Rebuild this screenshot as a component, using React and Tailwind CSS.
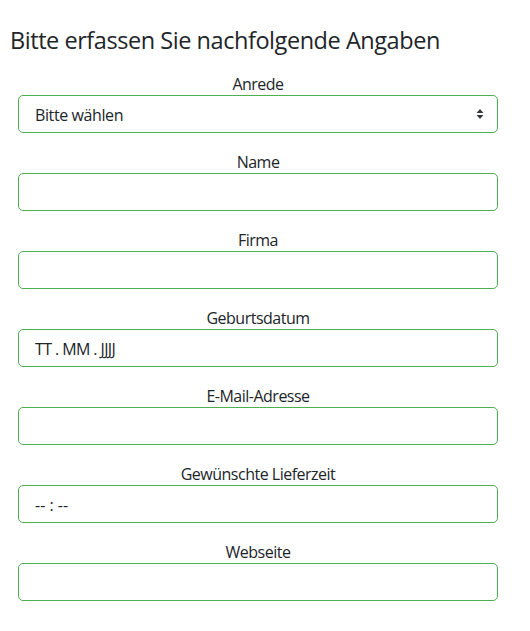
import React from "react";

function Field({ label, children }) {
  return (
    <div className="mb-4">
      <div className="pt-[2px] text-center text-[16px] leading-[22px] tracking-[-0.5px] text-[#212529]">{label}</div>
      {children}
    </div>
  );
}

function Box({ children }) {
  return (
    <div className="flex h-[38px] items-center rounded-[5px] border border-[#4caf50] bg-white pl-4 pr-3 pt-[2px] text-[16px] tracking-[-0.4px] text-[#212529]">
      {children}
    </div>
  );
}

export default function App() {
  return (
    <div className="min-h-[631px] w-[530px] bg-white font-['Open_Sans',sans-serif] text-[#212529]">
      <div className="pl-[10px] pr-[32px] pt-[26px]">
        <h4 className="mb-4 text-[23.5px] leading-[29px] tracking-[-0.45px] text-[#212529]">
          Bitte erfassen Sie nachfolgende Angaben
        </h4>
        <div className="pl-2">
          <Field label="Anrede">
            <Box>
              <span className="flex-1">Bitte wählen</span>
              <svg width="8" height="12" viewBox="0 0 8 12" className="mr-[1px] -mt-[2px]">
                <path d="M4 1 L7.5 5 L0.5 5 Z" fill="#343a40" />
                <path d="M4 11 L7.5 7 L0.5 7 Z" fill="#343a40" />
              </svg>
            </Box>
          </Field>
          <Field label="Name"><Box /></Field>
          <Field label="Firma"><Box /></Field>
          <Field label="Geburtsdatum">
            <Box><span className="tracking-[-0.6px]">TT . MM . JJJJ</span></Box>
          </Field>
          <Field label="E-Mail-Adresse"><Box /></Field>
          <Field label="Gewünschte Lieferzeit">
            <Box><span className="tracking-[0px]">-- : --</span></Box>
          </Field>
          <Field label="Webseite"><Box /></Field>
        </div>
      </div>
    </div>
  );
}
